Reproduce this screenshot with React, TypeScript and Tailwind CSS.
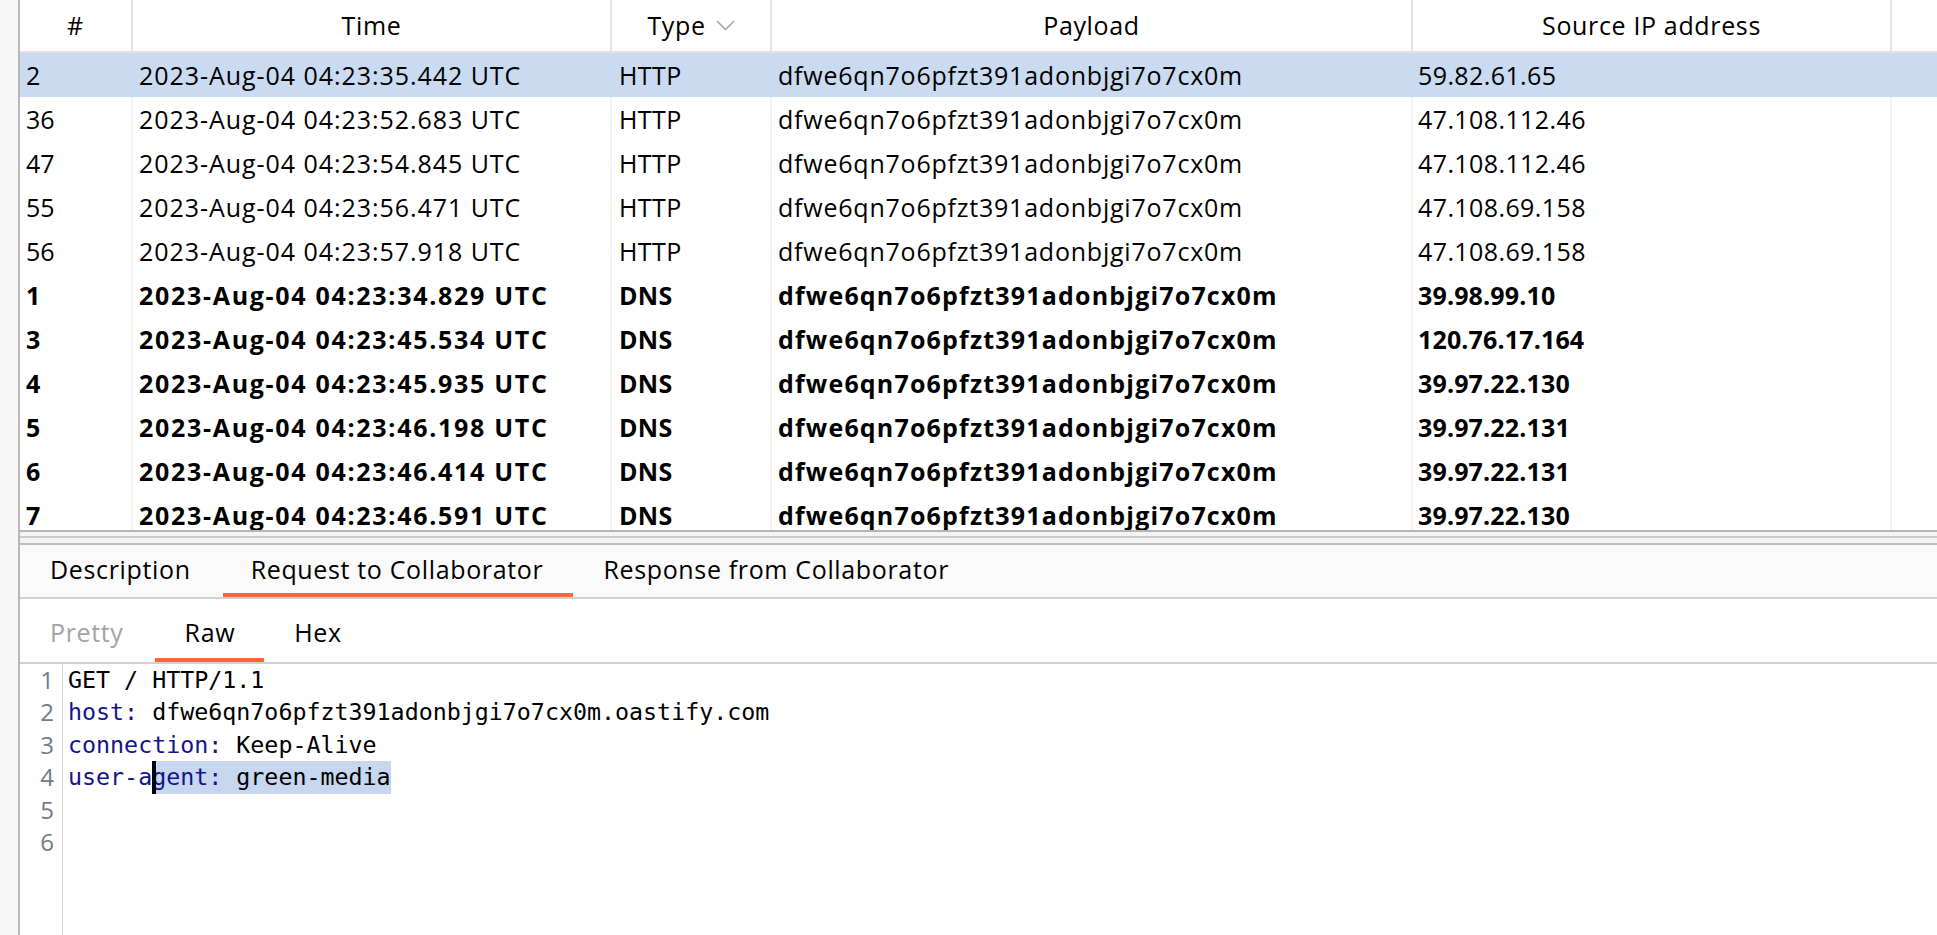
import React from "react";

type Row = { id: string; time: string; type: string; ip: string; sel?: boolean; bold?: boolean };

const PAYLOAD = "dfwe6qn7o6pfzt391adonbjgi7o7cx0m";

const rows: Row[] = [
  { id: "2", time: "2023-Aug-04 04:23:35.442 UTC", type: "HTTP", ip: "59.82.61.65", sel: true },
  { id: "36", time: "2023-Aug-04 04:23:52.683 UTC", type: "HTTP", ip: "47.108.112.46" },
  { id: "47", time: "2023-Aug-04 04:23:54.845 UTC", type: "HTTP", ip: "47.108.112.46" },
  { id: "55", time: "2023-Aug-04 04:23:56.471 UTC", type: "HTTP", ip: "47.108.69.158" },
  { id: "56", time: "2023-Aug-04 04:23:57.918 UTC", type: "HTTP", ip: "47.108.69.158" },
  { id: "1", time: "2023-Aug-04 04:23:34.829 UTC", type: "DNS", ip: "39.98.99.10", bold: true },
  { id: "3", time: "2023-Aug-04 04:23:45.534 UTC", type: "DNS", ip: "120.76.17.164", bold: true },
  { id: "4", time: "2023-Aug-04 04:23:45.935 UTC", type: "DNS", ip: "39.97.22.130", bold: true },
  { id: "5", time: "2023-Aug-04 04:23:46.198 UTC", type: "DNS", ip: "39.97.22.131", bold: true },
  { id: "6", time: "2023-Aug-04 04:23:46.414 UTC", type: "DNS", ip: "39.97.22.131", bold: true },
  { id: "7", time: "2023-Aug-04 04:23:46.591 UTC", type: "DNS", ip: "39.97.22.130", bold: true },
];

function Chevron() {
  return (
    <svg width="19" height="11" viewBox="0 0 19 11" className="shrink-0">
      <polyline points="1,1 9.5,9.5 18,1" fill="none" stroke="#a9a9a9" strokeWidth="1.6" />
    </svg>
  );
}

export default function App() {
  return (
    <div className="flex h-[935px] w-[1937px] overflow-hidden bg-white text-black font-['Open_Sans',sans-serif]">
      <div className="w-[18px] shrink-0 bg-[#f7f7f7]" />
      <div className="w-[2px] shrink-0 bg-[#bbb7bb]" />
      <div className="flex min-w-0 flex-1 flex-col">
        {/* Table */}
        <div className="h-[530px] shrink-0 overflow-hidden">
          <div className="grid h-[53px] grid-cols-[111px_479px_160px_641px_479px_1fr] border-b-2 border-[#e2e2e2] text-[25px] leading-none tracking-[0.65px]">
            <div className="flex items-center justify-center">#</div>
            <div className="flex items-center justify-center border-l-2 border-[#e4e4e4]">Time</div>
            <div className="flex items-center justify-center gap-[10px] border-l-2 border-[#e4e4e4]">
              <span>Type</span>
              <Chevron />
            </div>
            <div className="flex items-center justify-center border-l-2 border-[#e4e4e4]">Payload</div>
            <div className="flex items-center justify-center border-l-2 border-[#e4e4e4]">Source IP address</div>
            <div className="border-l-2 border-[#e4e4e4]" />
          </div>
          {rows.map((r) => {
            const bc = r.sel ? "border-transparent" : "border-[#f3f3f3]";
            return (
              <div
                key={r.id}
                className={`grid h-[44px] grid-cols-[111px_479px_160px_641px_479px_1fr] text-[25px] leading-none ${
                  r.sel ? "bg-[#c9daf1]" : ""
                } ${r.bold ? "font-bold" : ""}`}
              >
                <div className="flex items-center pl-[6px]">{r.id}</div>
                <div
                  className={`flex items-center border-l-2 pl-[6px] ${bc} ${
                    r.bold ? "tracking-[1.7px]" : "tracking-[0.95px]"
                  }`}
                >
                  {r.time}
                </div>
                <div className={`flex items-center border-l-2 pl-[7px] ${bc} ${r.bold ? "tracking-[0.3px]" : "tracking-[0.4px]"}`}>
                  {r.type}
                </div>
                <div
                  className={`flex items-center border-l-2 pl-[6px] ${bc} ${
                    r.bold ? "tracking-[1.18px]" : "tracking-[0.78px]"
                  }`}
                >
                  {PAYLOAD}
                </div>
                <div className={`flex items-center border-l-2 pl-[5px] ${bc} ${r.bold ? "tracking-[0.15px]" : "tracking-[0.4px]"}`}>
                  {r.ip}
                </div>
                <div className={`border-l-2 ${bc}`} />
              </div>
            );
          })}
        </div>

        {/* Splitter */}
        <div className="h-[2px] shrink-0 bg-[#b6b6b6]" />
        <div className="h-[4px] shrink-0 bg-[#f4f4f4]" />
        <div className="h-[2px] shrink-0 bg-[#cbcbcb]" />
        <div className="h-[5px] shrink-0 bg-[#f4f4f4]" />
        <div className="h-[2px] shrink-0 bg-[#bdbdbd]" />

        {/* Main tabs */}
        <div className="flex h-[54px] shrink-0 gap-[2px] border-b-2 border-[#cfd2d2] bg-[#fafafa] pl-[1px] text-[25px] leading-none tracking-[0.65px]">
          <div className="flex items-center border-b-4 border-transparent pl-[29px] pr-[30px]">Description</div>
          <div className="flex items-center border-b-4 border-[#ff6633] pl-[28px] pr-[30px]">Request to Collaborator</div>
          <div className="flex items-center border-b-4 border-transparent pl-[28px] pr-[30px]">Response from Collaborator</div>
        </div>

        {/* Sub tabs */}
        <div className="flex h-[65px] shrink-0 border-b-2 border-[#cfd2d2] bg-white text-[25px] leading-none tracking-[0.65px]">
          <div className="flex items-center border-b-4 border-transparent pl-[30px] pr-[31px] pt-[8px] text-[#a3a3a3]">Pretty</div>
          <div className="flex items-center border-b-4 border-[#ff6633] pl-[30px] pr-[29px] pt-[8px]">Raw</div>
          <div className="flex items-center border-b-4 border-transparent px-[30px] pt-[8px]">Hex</div>
        </div>

        {/* Editor */}
        <div className="flex min-h-0 flex-1">
          <div className="w-[43px] shrink-0 border-r border-[#d9d9d9] pr-[8px] text-right text-[24px] leading-[32.4px] text-[#6f7b88]">
            {[1, 2, 3, 4, 5, 6].map((n) => (
              <div key={n}>{n}</div>
            ))}
          </div>
          <div className="flex-1 whitespace-pre pl-[5px] font-['DejaVu_Sans_Mono',monospace] text-[23.3px] leading-[32.4px] text-black">
            <div>GET / HTTP/1.1</div>
            <div>
              <span className="text-[#14148c]">host:</span> dfwe6qn7o6pfzt391adonbjgi7o7cx0m.oastify.com
            </div>
            <div>
              <span className="text-[#14148c]">connection:</span> Keep-Alive
            </div>
            <div>
              <span className="text-[#14148c]">user-a</span>
              <span className="relative inline-block bg-[#c6d7ef]">
                <span className="absolute left-0 top-0 h-full w-[3.5px] bg-black" />
                <span className="text-[#14148c]">gent:</span> green-media
              </span>
            </div>
            <div>&nbsp;</div>
            <div>&nbsp;</div>
          </div>
        </div>
      </div>
    </div>
  );
}
